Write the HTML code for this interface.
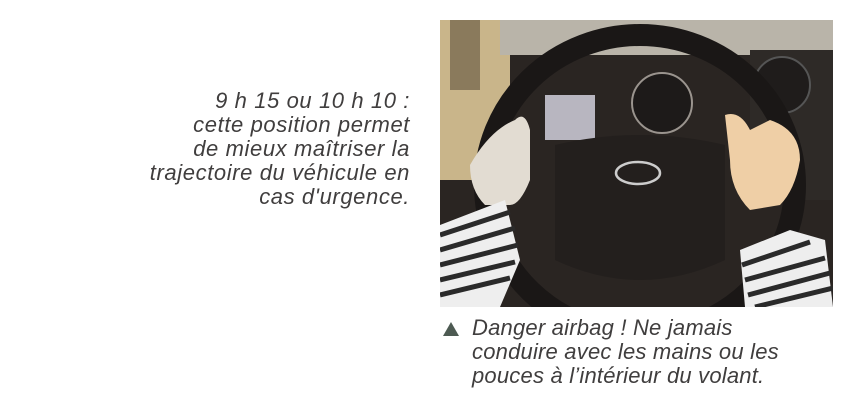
<!DOCTYPE html>
<html><head><meta charset="utf-8"><style>
body{margin:0;width:843px;height:417px;background:#fff;overflow:hidden;position:relative;font-family:"Liberation Sans",sans-serif;font-style:italic;color:#403e3e}
.l{position:absolute;right:433px;top:89px;text-align:right;font-size:22px;line-height:24px;letter-spacing:0.6px}
.c{position:absolute;left:472px;top:316px;font-size:22px;line-height:24px;letter-spacing:0.2px}
.tri{position:absolute;left:443px;top:322px;width:0;height:0;border-left:8px solid transparent;border-right:8px solid transparent;border-bottom:14px solid #4d5a52}
svg{position:absolute;left:440px;top:20px}
</style></head><body>
<div class="l">9 h 15 ou 10 h 10 :<br>cette position permet<br>de mieux maîtriser la<br>trajectoire du véhicule en<br>cas d'urgence.</div>
<svg width="393" height="287" viewBox="0 0 393 287">
<rect width="393" height="287" fill="#2a2522"/>
<rect x="0" y="0" width="70" height="160" fill="#c9b58a"/>
<rect x="10" y="0" width="30" height="70" fill="#8a7a5c"/>
<rect x="60" y="0" width="333" height="35" fill="#b9b4a9"/>
<rect x="310" y="30" width="83" height="150" fill="#2e2a27"/>
<rect x="105" y="75" width="50" height="45" fill="#b8b6c0"/>
<circle cx="222" cy="83" r="30" fill="#1d1a19" stroke="#9a948e" stroke-width="2"/>
<circle cx="342" cy="65" r="28" fill="#1f1c1b" stroke="#555" stroke-width="2"/>
<ellipse cx="200" cy="165" rx="155" ry="150" fill="none" stroke="#1a1716" stroke-width="22"/>
<path d="M115 125 Q200 105 285 125 L285 240 Q200 280 115 240Z" fill="#231f1d"/>
<ellipse cx="198" cy="153" rx="22" ry="11" fill="none" stroke="#ccc" stroke-width="2.5"/>
<path d="M30 145 Q50 110 75 100 Q85 90 90 110 L90 160 Q80 185 70 185 L45 185 Q30 170 30 145Z" fill="#e2dcd2"/>
<path d="M285 95 Q300 90 310 110 L330 100 Q360 110 360 140 Q355 170 340 185 L310 190 Q290 170 290 140Z" fill="#efcfa6"/>
<path d="M0 205 L65 180 L80 240 L60 287 L0 287Z" fill="#eeeeee"/>
<g stroke="#2a2a2a" stroke-width="5" fill="none">
<path d="M0 215 L70 192"/><path d="M0 230 L75 208"/><path d="M0 245 L78 225"/><path d="M0 260 L75 242"/><path d="M0 275 L70 258"/>
</g>
<path d="M300 230 L350 210 L385 220 L393 287 L305 287Z" fill="#eeeeee"/>
<g stroke="#2a2a2a" stroke-width="5" fill="none">
<path d="M302 245 L370 222"/><path d="M305 260 L385 238"/><path d="M308 275 L390 253"/><path d="M315 287 L393 268"/>
</g>
</svg>
<div class="tri"></div>
<div class="c">Danger airbag ! Ne jamais<br>conduire avec les mains ou les<br>pouces à l’intérieur du volant.</div>
</body></html>
